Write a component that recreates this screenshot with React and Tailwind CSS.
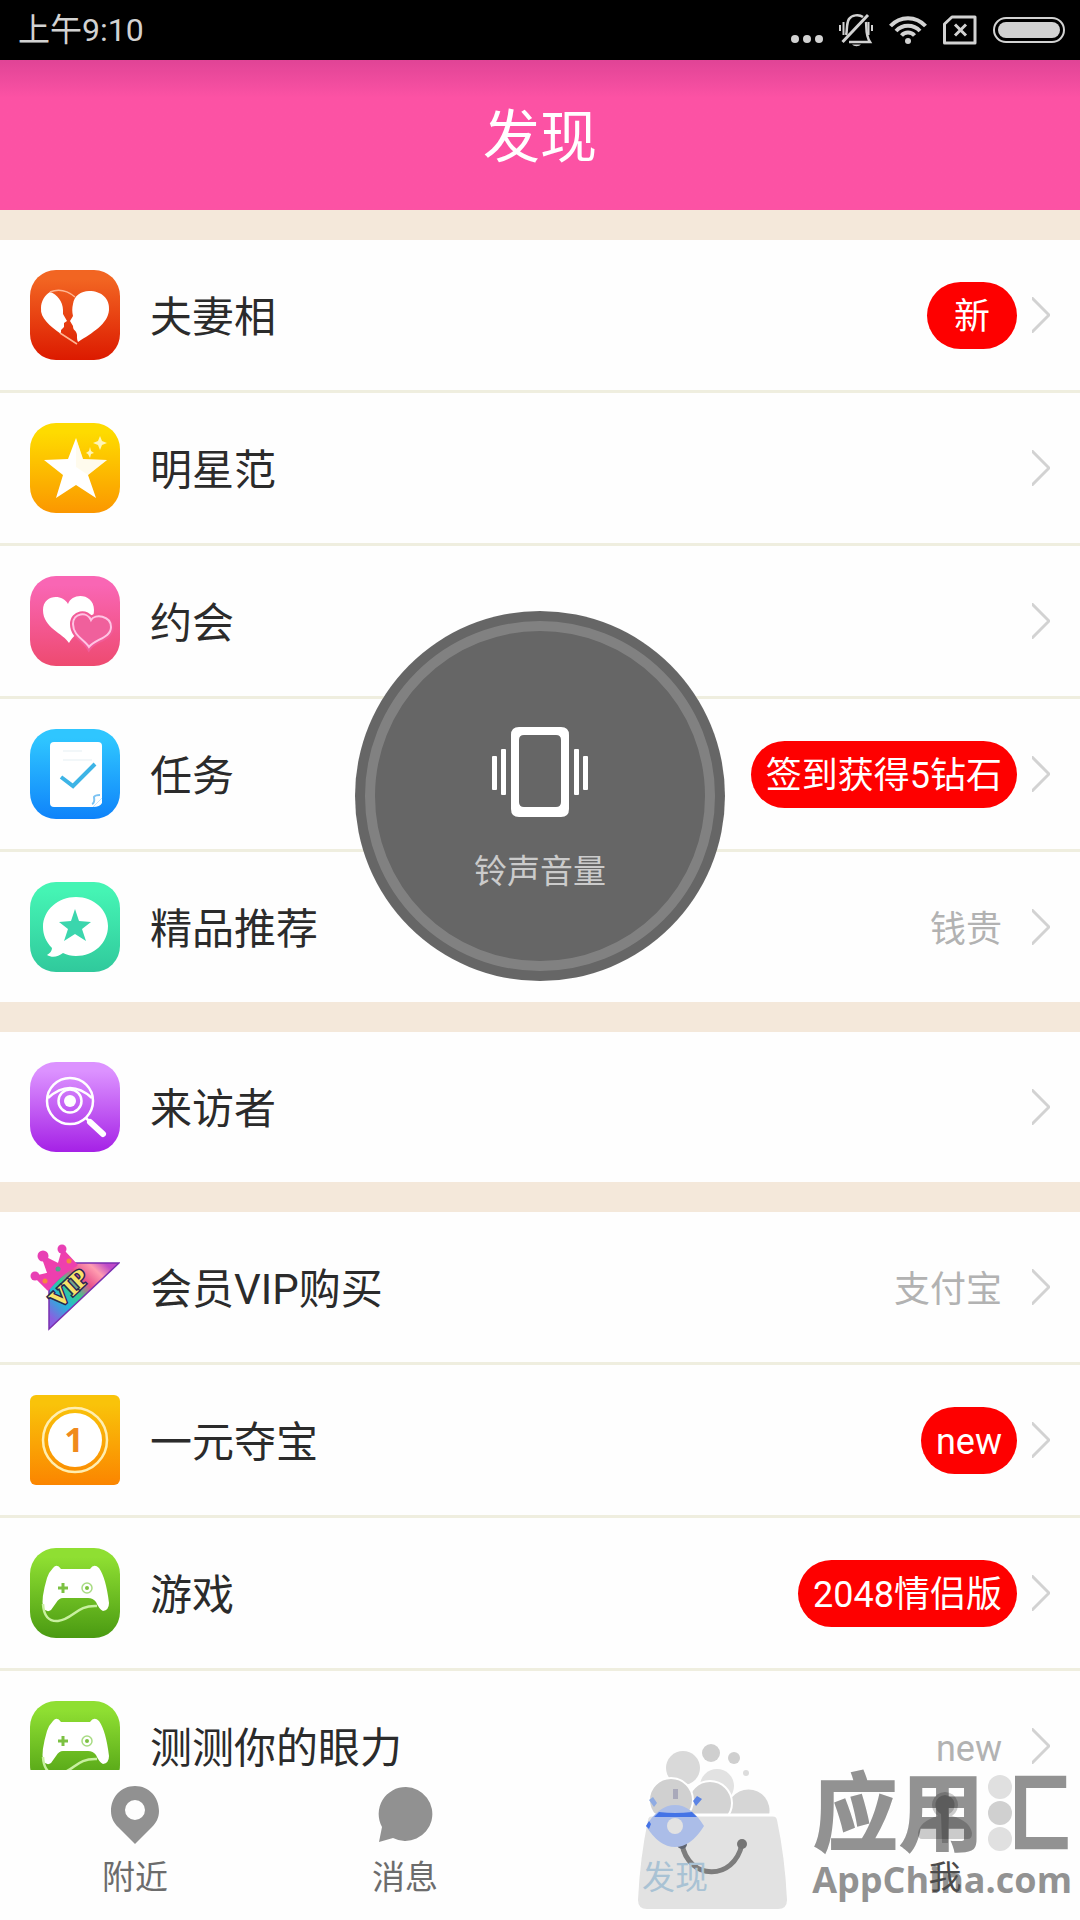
import { useState } from 'react';

const FONT = "font-[Roboto,'Noto_Sans_CJK_SC',sans-serif]";

/* ---------- status bar ---------- */

function StatusBar() {
  return (
    <div className="flex h-[60px] shrink-0 items-center justify-between bg-black pr-[15px] pl-[18px] text-[#d2d2d2]">
      <span className="text-[32px] leading-9">上午9:10</span>
      <div className="flex items-center gap-4" aria-hidden="true">
        <svg width="32" height="32" viewBox="0 0 32 32" fill="currentColor">
          <circle cx="4" cy="25" r="4" />
          <circle cx="16" cy="25" r="4" />
          <circle cx="28" cy="25" r="4" />
        </svg>
        <svg width="34" height="34" viewBox="0 0 34 34" fill="none" stroke="currentColor" strokeWidth="2.500">
          <path d="M7 22C8.500 18 7 11 10 6C12.500 2 20 1 24 4" />
          <path d="M27 9C28 15 26 21 31 29H10" />
          <path d="M3.500 29L29 2" strokeWidth="3" />
          <path d="M1 12v6M4.500 9v13M33 12v6M29.500 9v13" strokeWidth="2" />
          <path d="M13 31.500a5 3 0 0 0 9 0z" fill="currentColor" stroke="none" />
        </svg>
        <svg width="38" height="30" viewBox="0 0 38 30" fill="none" stroke="currentColor" strokeWidth="4">
          <path d="M1.500 11C11 .5 27 .5 36.500 11" />
          <path d="M7 16C13.500 9 24.500 9 31 16" />
          <path d="M12.500 20.500C16 16.500 22 16.500 25.500 20.500" />
          <circle cx="19" cy="26" r="3" fill="currentColor" stroke="none" />
        </svg>
        <svg width="34" height="30" viewBox="0 0 34 30" fill="none" stroke="currentColor" strokeWidth="3">
          <path d="M1.500 9L9 2H32V28H1.500z" strokeLinejoin="round" />
          <path d="M12 9.500L23 20.500M23 9.500L12 20.500" />
        </svg>
        <span className="flex h-[26px] w-[72px] rounded-full border-2 border-current p-[3px]">
          <span className="flex-1 rounded-full bg-[#d2d2d2]" />
        </span>
      </div>
    </div>
  );
}

/* ---------- list icons ---------- */

function Tile({ id, from, to, radius = 26, children }) {
  return (
    <svg width="90" height="90" viewBox="0 0 90 90" className="shrink-0" aria-hidden="true">
      <defs>
        <linearGradient id={id} x1="0" y1="0" x2="0" y2="1">
          <stop offset="0.1" stopColor={from} />
          <stop offset="1" stopColor={to} />
        </linearGradient>
      </defs>
      <rect width="90" height="90" rx={radius} fill={`url(#${id})`} />
      {children}
    </svg>
  );
}

function CoupleIcon() {
  return (
    <Tile id="couple" from="#f26522" to="#dc1a00">
      <path
        d="M20 22C27 24 33 32 33 40L33 44L37 51L34 53L34 57L31 60L31 64C20 56 10 48 11 38C11 31 15 25 20 22z"
        fill="#fff"
      />
      <path
        d="M43 34C44 26 51 21 59 21C72 21 80 29 79 40C78 54 62 63 48 72C46 68 48 65 46 62C45 60 43 60 43 56L40 51L43 46C42 42 42 38 43 34z"
        fill="#fff"
      />
      <path d="M20 22Q33 17 45 27M30 63L47 74" fill="none" stroke="#ffb592" strokeWidth="1.500" />
    </Tile>
  );
}

function StarIcon() {
  return (
    <Tile id="star" from="#fedb00" to="#fb9700">
      <path d="M46 15L53 36L77 37L58 52L66 75L46 62L26 75L33 52L14 37L38 36z" fill="#fff" />
      <path d="M46 15L53 36L77 37L58 52L46 44z" fill="#fff3c4" opacity="0.300" />
      <path d="M70 13L72 18L77 20L72 22L70 27L68 22L63 20L68 18zM60 24L61 28L64 30L61 31L60 35L58 31L56 30L59 28z" fill="#fff6b8" />
    </Tile>
  );
}

function DateIcon() {
  return (
    <Tile id="date" from="#f966b4" to="#ee4a70">
      <path d="M39 67C33 57 13 52 13 34C13 19 32 17 38 28C42 16 64 17 64 34C64 51 46 54 39 67z" fill="#fff" />
      <path
        d="M59 71C55 64 43 60 43 48C43 37 57 35 61 44C65 37 81 40 81 51C81 62 65 63 59 71z"
        fill="#f25c98"
        stroke="#f25c98"
        strokeWidth="6"
      />
      <path
        d="M59 71C55 64 43 60 43 48C43 37 57 35 61 44C65 37 81 40 81 51C81 62 65 63 59 71z"
        fill="#f0609c"
        stroke="#ffc4e4"
        strokeWidth="2"
      />
    </Tile>
  );
}

function TaskIcon() {
  return (
    <Tile id="task" from="#2fc6ff" to="#0f83fa">
      <path d="M24 13H68Q72 13 72 17V69L63 78H24Q20 78 20 74V17Q20 13 24 13z" fill="#fff" />
      <path d="M72 69L63 78Q70 78 72 74z" fill="#fff" />
      <path d="M62 75Q65 74 64 68Q65 66 70 66" fill="none" stroke="#7cc3f3" strokeWidth="2" />
      <path d="M33 31H62M33 22H52" stroke="#f2f7f9" strokeWidth="2" />
      <path d="M31 48L43 57L65 35" fill="none" stroke="#3db4e6" strokeWidth="4" />
    </Tile>
  );
}

function RecommendIcon() {
  return (
    <Tile id="recommend" from="#45f4b4" to="#30c99c">
      <path d="M46 15C64 15 78 28 78 44C78 61 64 74 46 74C41 74 37 73 33 71C28 75 22 76 17 73C20 71 22 69 22 66C16 60 13 53 13 45C13 28 28 15 46 15z" fill="#fff" />
      <path d="M45 27L49 39L61 40L52 47L56 59L45 52L34 59L38 47L29 40L41 39z" fill="#3bd6ad" />
    </Tile>
  );
}

function VisitorIcon() {
  return (
    <Tile id="visitor" from="#dc92ff" to="#a521e6">
      <g fill="none" stroke="#fff" strokeWidth="2.500">
        <circle cx="40" cy="39" r="23" />
        <circle cx="40" cy="39" r="11.500" />
        <path d="M18 36Q40 16 62 36" />
        <path d="M56 56L60 60" />
        <path d="M60 60L73 72" strokeWidth="6" strokeLinecap="round" />
      </g>
      <circle cx="40" cy="39" r="6" fill="#fff" />
    </Tile>
  );
}

function VipIcon() {
  return (
    <svg width="90" height="90" viewBox="0 0 90 90" className="shrink-0" aria-hidden="true">
      <defs>
        <linearGradient id="vip" x1="0.100" y1="0.900" x2="0.900" y2="0.100">
          <stop offset="0" stopColor="#8a5fe0" />
          <stop offset="0.250" stopColor="#25b4dc" />
          <stop offset="0.450" stopColor="#35cf8d" />
          <stop offset="0.650" stopColor="#e8508c" />
          <stop offset="0.850" stopColor="#ff9db0" />
          <stop offset="1" stopColor="#c04ac8" />
        </linearGradient>
      </defs>
      <path d="M19 46V87L89 21H45z" fill="url(#vip)" stroke="#7a2fb0" strokeWidth="1.500" />
      <text
        x="29"
        y="67"
        transform="rotate(-43 29 67)"
        className="font-['Liberation_Serif',serif] text-[25px] font-bold"
        fill="#f7e36a"
        stroke="#2a2350"
        strokeWidth="3"
        paintOrder="stroke"
      >
        VIP
      </text>
      <path d="M18 47L6 35L19 32L13 15L29 23L33 9L46 23Q30 32 18 47z" fill="#ee3fae" stroke="#ee3fae" strokeWidth="3" strokeLinejoin="round" />
      <circle cx="5" cy="34" r="4.500" fill="#e83fb4" />
      <circle cx="13" cy="14" r="5.500" fill="#e83fb4" />
      <circle cx="32" cy="7" r="4.500" fill="#e83fb4" />
      <circle cx="28" cy="27" r="2.500" fill="#4fa58c" />
      <circle cx="15" cy="39" r="2.500" fill="#f5893f" />
      <circle cx="39" cy="19" r="2.500" fill="#f5893f" />
    </svg>
  );
}

function OneYuanIcon() {
  return (
    <Tile id="yuan" from="#f9c30a" to="#fb8500" radius={6}>
      <circle cx="45" cy="45" r="32" fill="none" stroke="#ffeeb0" strokeWidth="2.500" />
      <circle cx="45" cy="45" r="27" fill="#fff" />
      <text x="44" y="57" textAnchor="middle" className="font-['Noto_Sans',sans-serif] text-[34px] font-bold" fill="#f08a1c">
        1
      </text>
    </Tile>
  );
}

function GameIcon({ id }) {
  return (
    <Tile id={id} from="#8fdf32" to="#4a9a12">
      <path
        d="M23 20Q27 15 31 21H60Q64 15 69 20Q76 30 79 55Q79 62 73 63Q69 61 66 54Q63 50 58 50H33Q29 50 26 55L21 62Q17 65 13 60Q11 50 17 30Q19 24 23 20z"
        fill="#fff"
      />
      <path d="M33 35V45M28 40H38" stroke="#7cc142" strokeWidth="3" />
      <circle cx="57" cy="40" r="5" fill="none" stroke="#a9dc84" strokeWidth="1.500" />
      <circle cx="57" cy="40" r="2" fill="#7cc142" />
      <path d="M13 56Q14 74 28 73C44 71 46 57 67 58" fill="none" stroke="#c8f0a0" strokeWidth="2.500" />
    </Tile>
  );
}

/* ---------- list ---------- */

const groups = [
  [
    { label: '夫妻相', icon: <CoupleIcon />, badge: '新' },
    { label: '明星范', icon: <StarIcon /> },
    { label: '约会', icon: <DateIcon /> },
    { label: '任务', icon: <TaskIcon />, badge: '签到获得5钻石' },
    { label: '精品推荐', icon: <RecommendIcon />, note: '钱贵' },
  ],
  [{ label: '来访者', icon: <VisitorIcon /> }],
  [
    { label: '会员VIP购买', icon: <VipIcon />, note: '支付宝' },
    { label: '一元夺宝', icon: <OneYuanIcon />, badge: 'new' },
    { label: '游戏', icon: <GameIcon id="game" />, badge: '2048情侣版' },
    { label: '测测你的眼力', icon: <GameIcon id="eyesight" />, note: 'new' },
  ],
];

function Row({ label, icon, badge, note }) {
  return (
    <li>
      <button type="button" className="flex h-[150px] w-full items-center px-[30px] text-left">
        {icon}
        <span className="ml-[30px] flex-1 pt-[5px] text-[42px] leading-[50px] text-[#2b2b2b]">{label}</span>
        {badge && (
          <span className="flex h-[67px] min-w-[90px] items-center justify-center rounded-full bg-[#fe0000] px-[15px] pt-1 text-[36px] leading-[48px] text-white">
            {badge}
          </span>
        )}
        {note && <span className="px-[15px] pt-[5px] text-[36px] leading-[48px] text-[#b2b2b2]">{note}</span>}
        <svg
          width="18"
          height="36"
          viewBox="0 0 18 36"
          className="ml-[15px] shrink-0"
          fill="none"
          stroke="#d2d2d2"
          strokeWidth="3"
          aria-hidden="true"
        >
          <path d="M-1 0L17 18L-1 36" />
        </svg>
      </button>
    </li>
  );
}

/* ---------- volume popup ---------- */

function RingerPopup() {
  return (
    <div className="absolute top-[611px] left-1/2 size-[370px] -translate-x-1/2 rounded-full bg-[#636363]/98 p-[10px]" role="status">
      <div className="flex size-full flex-col items-center rounded-full border-10 border-white/18 pt-[96px]">
        <svg width="96" height="90" viewBox="0 0 96 90" aria-hidden="true">
          <path
            d="M27 0H69Q77 0 77 8V82Q77 90 69 90H27Q19 90 19 82V8Q19 0 27 0zM32 8Q27 8 27 13V75Q27 80 32 80H64Q69 80 69 75V13Q69 8 64 8z"
            fill="#fff"
            fillRule="evenodd"
          />
          <g fill="#fff">
            <rect x="0" y="29" width="5" height="34" rx="1" />
            <rect x="9" y="22" width="5" height="46" rx="1" />
            <rect x="82" y="22" width="5" height="46" rx="1" />
            <rect x="91" y="29" width="5" height="34" rx="1" />
          </g>
        </svg>
        <span className="mt-[34px] text-[33px] leading-[42px] text-[#cbcbcb]">铃声音量</span>
      </div>
    </div>
  );
}

/* ---------- bottom bar ---------- */

function Watermark() {
  return (
    <div className="pointer-events-none absolute right-2 bottom-[10px] flex items-end gap-6">
      <svg width="152" height="170" viewBox="0 0 152 170" aria-hidden="true">
        <circle cx="47" cy="28" r="17" fill="#d9d9d9" />
        <circle cx="75" cy="13" r="9" fill="#cfcfcf" />
        <circle cx="98" cy="18" r="6" fill="#cfcfcf" />
        <circle cx="110" cy="33" r="3" fill="#dcdcdc" />
        <circle cx="81" cy="46" r="17" fill="#e2e2e2" />
        <path d="M92 75A21 21 0 1 1 133 75z" fill="#d6d6d6" />
        <circle cx="74" cy="63" r="22" fill="#d3d3d3" stroke="#fff" strokeWidth="2" />
        <circle cx="35" cy="60" r="22" fill="#d0d0d0" stroke="#fff" strokeWidth="2" />
        <path d="M16 76H136Q140 76 141 80Q149 118 151 160Q151 169 142 169H11Q2 169 2 160Q4 118 12 80Q13 76 16 76z" fill="#e2e2e2" />
        <path d="M14 75H140" stroke="#fff" strokeWidth="3" />
        <path d="M46 104C52 140 98 142 106 104" fill="none" stroke="#7d7d7d" strokeWidth="5" />
        <circle cx="46" cy="104" r="5" fill="#5f6470" />
        <circle cx="106" cy="104" r="5" fill="#757575" />
      </svg>
      <div className="flex flex-col pb-[10px] text-[#929292]">
        <div className="relative flex text-[86px] leading-[88px] font-black">
          {/* the three dots stand in for the water radical */}
          <span className="absolute top-[3px] right-[60px] flex flex-col gap-[2px]">
            <span className="size-6 rounded-full bg-[#e0e0e0]" />
            <span className="size-6 rounded-full bg-[#d0d0d0]" />
            <span className="size-6 rounded-full bg-[#e0e0e0]" />
          </span>
          <span>应用</span>
          <span className="relative bg-linear-to-r from-transparent from-36% to-[#929292] to-36% bg-clip-text text-transparent">汇</span>
        </div>
        <span className="font-['Open_Sans',sans-serif] text-[36px] leading-10 font-bold">AppChina.com</span>
      </div>
    </div>
  );
}

const tabs = [
  {
    label: '附近',
    color: 'text-[#6c6c6c]',
    icon: (
      <svg width="50" height="60" viewBox="0 0 50 60" aria-hidden="true">
        <path
          d="M25 1C39 1 49 12 49 26C49 33 46 38 42 42L25 59L8 42C4 38 1 33 1 26C1 12 11 1 25 1zM25 15A10 10 0 1 0 25 35A10 10 0 1 0 25 15z"
          fill="#919191"
          fillRule="evenodd"
        />
      </svg>
    ),
  },
  {
    label: '消息',
    color: 'text-[#6c6c6c]',
    icon: (
      <svg width="56" height="60" viewBox="0 0 56 60" aria-hidden="true">
        <path d="M29 2A27 27 0 1 1 16 53L2 57L5 42A27 27 0 0 1 29 2z" fill="#919191" />
      </svg>
    ),
  },
  {
    label: '发现',
    color: 'text-[#a9c2d4]',
    icon: (
      <svg width="60" height="66" viewBox="0 0 60 66" aria-hidden="true">
        <path d="M1 44Q14 23 30 23Q46 23 59 44Q46 65 30 65Q14 65 1 44z" fill="#abbde8" />
        <path d="M9 35L14 30Q30 32 47 30L52 35z" fill="#4473e6" />
        <path d="M1 44L4 39L6 42L4 47z" fill="#4473e6" />
        <circle cx="30" cy="44" r="8" fill="#e2e2e2" />
        <path d="M4 18L8 15L12 21L9 25z" fill="#8fabe2" />
        <path d="M57 17L52 14L48 19L51 24z" fill="#5c84e4" />
        <rect x="28" y="7" width="5" height="10" fill="#a9a9ba" />
      </svg>
    ),
  },
  {
    label: '我',
    color: 'text-[#4a4a4a]',
    icon: (
      <svg width="56" height="60" viewBox="0 0 56 60" fill="#000" fillOpacity="0.200" aria-hidden="true">
        <path d="M28 7A13 13 0 0 1 35 31Q53 36 55 48Q55 54 51 54H5Q1 54 1 48Q3 36 21 31A13 13 0 0 1 28 7z" />
        <path d="M28 10A10 10 0 0 1 32 29L31 58H25L24 29A10 10 0 0 1 28 10z" />
      </svg>
    ),
  },
];

function TabBar() {
  const [active, setActive] = useState('发现');

  return (
    <footer className="relative shrink-0 bg-[#fefefe]">
      <Watermark />
      <nav className="relative grid h-[150px] grid-cols-4">
        {tabs.map((tab) => (
          <button
            key={tab.label}
            type="button"
            aria-current={active === tab.label ? 'page' : undefined}
            onClick={() => setActive(tab.label)}
            className="flex flex-col items-center pt-[14px]"
          >
            <span className="flex h-[62px] items-center">{tab.icon}</span>
            <span className={`mt-3 text-[33px] leading-10 ${tab.color}`}>{tab.label}</span>
          </button>
        ))}
      </nav>
    </footer>
  );
}

export default function App() {
  return (
    <div className={`relative flex h-screen flex-col overflow-hidden bg-[#f4e8da] ${FONT}`}>
      <StatusBar />
      <header className="flex h-[150px] shrink-0 items-center justify-center bg-[#fc52a4] bg-linear-to-b from-[#e04496] to-[#fc52a4] to-25%">
        <h1 className="pt-[5px] text-[57px] leading-[72px] text-white">发现</h1>
      </header>
      <main className="flex min-h-0 flex-1 flex-col gap-[30px] overflow-y-auto pt-[30px] [scrollbar-width:none]">
        {groups.map((rows) => (
          <ul key={rows[0].label} className="shrink-0 divide-y-3 divide-[#efeedf] bg-[#fefefe]">
            {rows.map((row) => (
              <Row key={row.label} {...row} />
            ))}
          </ul>
        ))}
      </main>
      <TabBar />
      <RingerPopup />
    </div>
  );
}
